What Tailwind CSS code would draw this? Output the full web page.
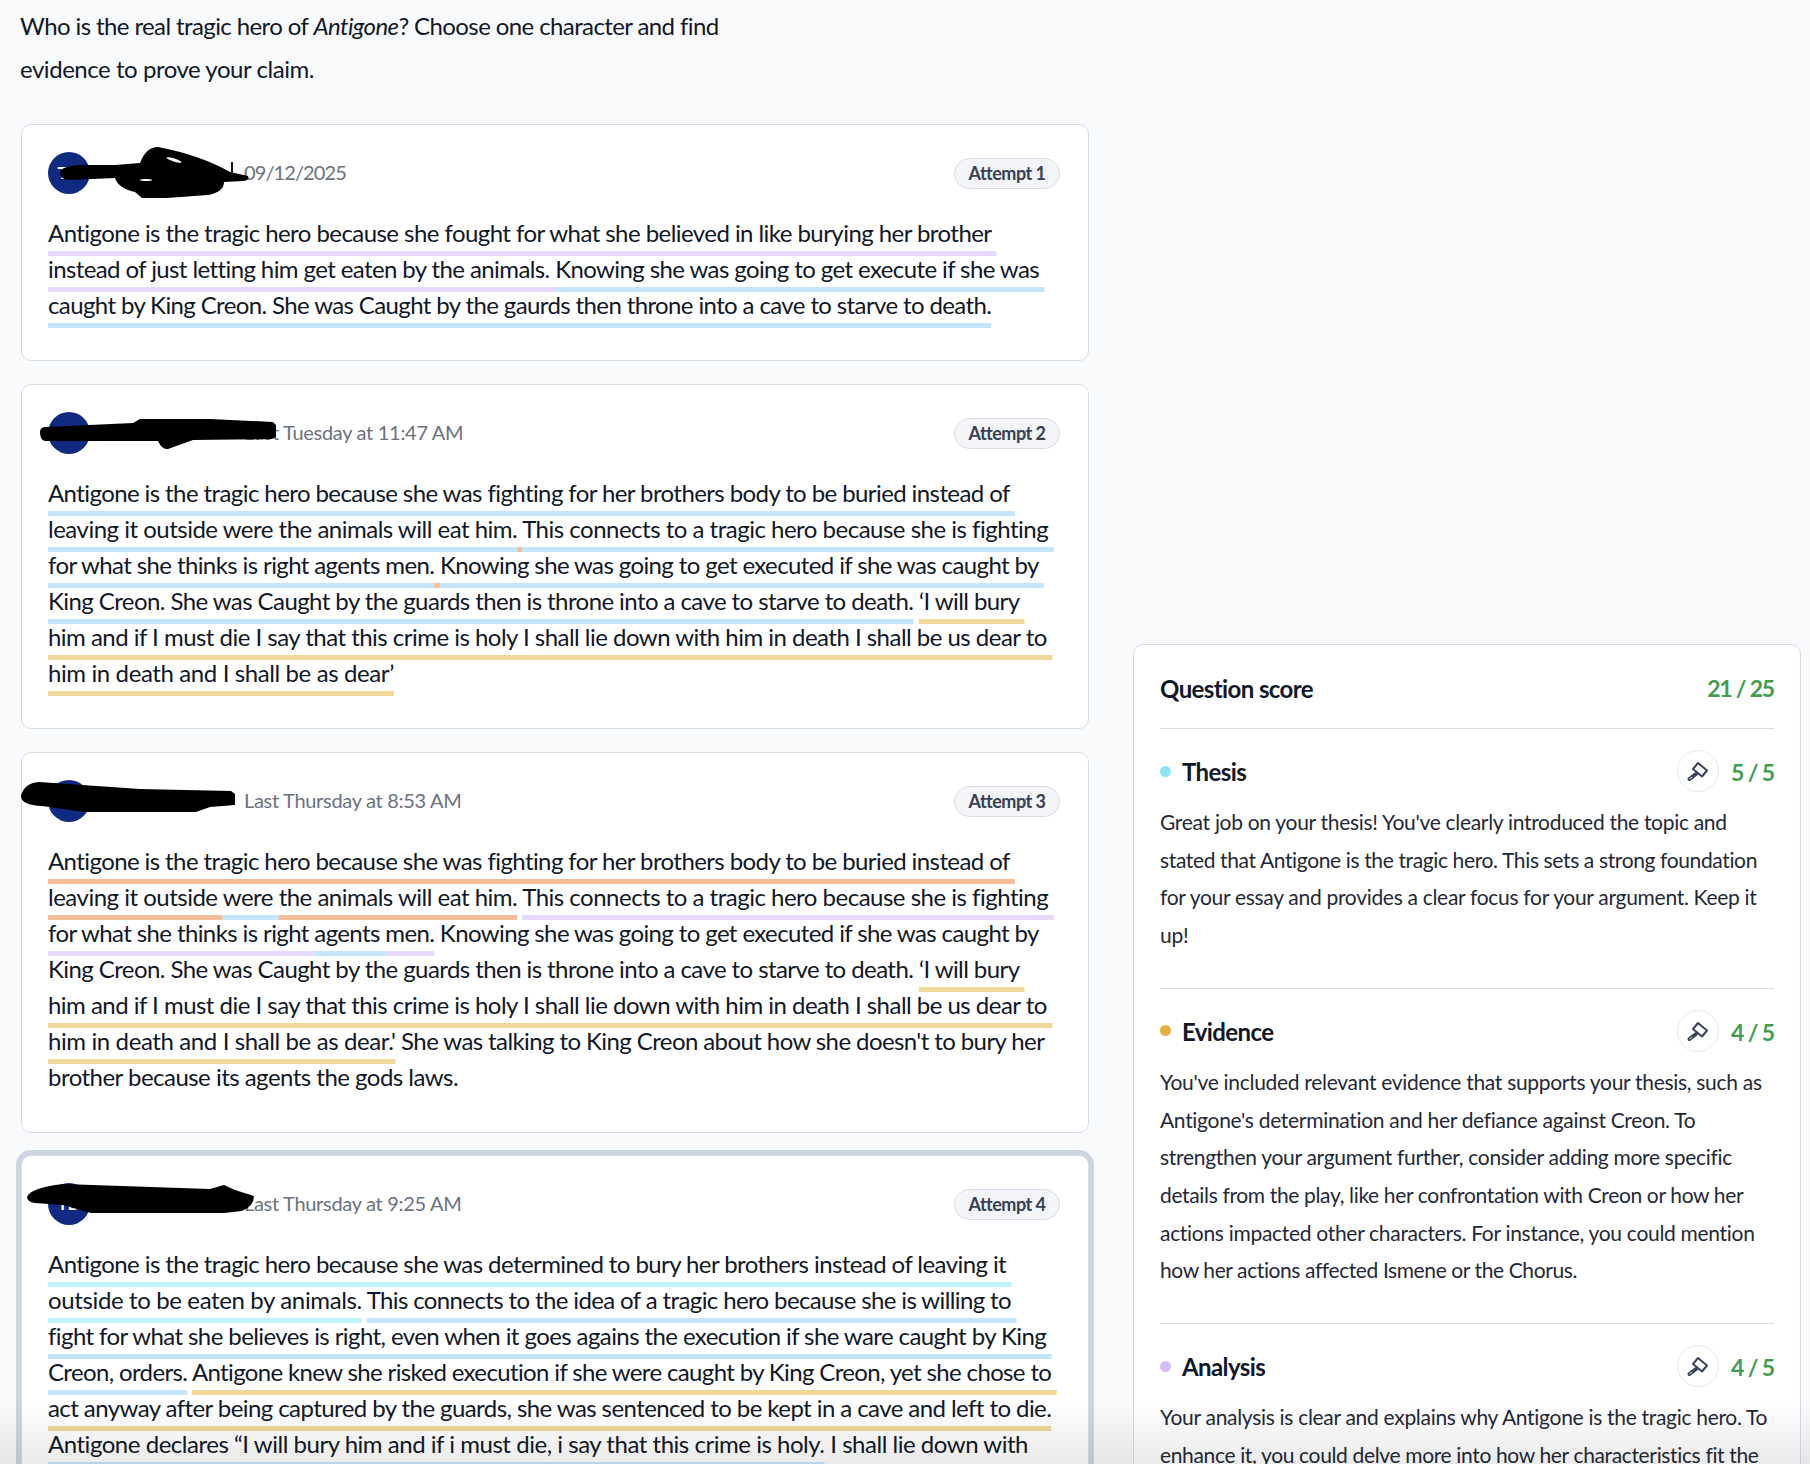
<!DOCTYPE html>
<html lang="en">
<head>
  <meta charset="UTF-8">
  <meta name="viewport" content="width=device-width, initial-scale=1.0">
  <title>Question score</title>
  <script src="https://cdn.jsdelivr.net/npm/@tailwindcss/browser@4"></script>
</head>
<body class="bg-[#f9fafc] font-['Lato','Noto_Sans',sans-serif] text-[#111827]">
<div class="relative h-[1464px] overflow-hidden flex pl-[21px] gap-[44px]">

  <!-- Left column: prompt and attempts -->
  <div class="w-[1068px] shrink-0">
    <p class="text-[24px] leading-[43px] tracking-[-0.6px] pt-[4px] pb-[34px] -ml-[1px]">Who is the real tragic hero of <em>Antigone</em>? Choose one character and find<br><span class="tracking-[-0.46px]">evidence to prove your claim.</span></p>

    <div class="flex flex-col gap-[23px]">

      <!-- Attempt 1 -->
      <div class="relative bg-white border border-[#d5dce8] rounded-[10px] pt-[27px] px-[26px] pb-[37px]">
        <div class="flex items-center justify-between mb-[21px]">
          <div class="flex items-center">
            <div class="w-[42px] h-[42px] rounded-full bg-[#0f2a80] text-white text-[17px] font-bold flex items-center justify-center">TD</div>
            <span class="w-[154px]"></span>
            <span class="text-[20px] text-[#6b7280] tracking-[-0.9px] -mt-[2px]">09/12/2025</span>
          </div>
          <span class="h-[31px] w-[106px] rounded-full bg-[#f3f5f9] border border-[#d5dce8] text-[18px] font-bold tracking-[-0.5px] text-[#374151] flex items-center justify-center mr-[2px]">Attempt 1</span>
        </div>
        <div class="text-[24px] leading-[36px] underline-offset-[9px] [text-decoration-skip-ink:none] [&>div]:whitespace-pre [&_span]:[text-decoration-thickness:5px]">
          <div class="tracking-[-0.556px]"><span class="underline decoration-[#e6d9fb]">Antigone is the tragic hero because she fought for what she believed in like burying her brother </span></div>
          <div class="tracking-[-0.6px]"><span class="underline decoration-[#e6d9fb]">instead of just letting him get eaten by the animals. </span><span class="underline decoration-[#c5e6fa]">Knowing she was going to get execute if she was </span></div>
          <div class="tracking-[-0.617px]"><span class="underline decoration-[#c5e6fa]">caught by King Creon. She was Caught by the gaurds then throne into a cave to starve to death.</span></div>
        </div>
        <svg class="absolute -left-[22px] -top-[1px] w-[300px] h-[100px]" viewBox="0 124 300 100"><rect x="231" y="162" width="2" height="14" fill="#111827"/><path fill="#000" d="M60 172Q62 166 80 165L115 165L140 163Q146 147 158 147Q200 155 230 172L248 176Q250 180 244 181L224 182Q224 192 208 195L167 198L142 198L135 192Q118 188 115 178L70 180Q60 180 60 172Z"/><ellipse cx="174" cy="160" rx="8" ry="1.5" fill="#fff" transform="rotate(18 174 160)"/><ellipse cx="146" cy="180" rx="6" ry="1" fill="#fff"/></svg>
      </div>

      <!-- Attempt 2 -->
      <div class="relative bg-white border border-[#d5dce8] rounded-[10px] pt-[27px] px-[26px] pb-[37px]">
        <div class="flex items-center justify-between mb-[21px]">
          <div class="flex items-center">
            <div class="w-[42px] h-[42px] rounded-full bg-[#0f2a80] text-white text-[17px] font-bold flex items-center justify-center">TD</div>
            <span class="w-[154px]"></span>
            <span class="text-[20px] text-[#6b7280] tracking-[-0.3px] -mt-[2px]">Last Tuesday at 11:47 AM</span>
          </div>
          <span class="h-[31px] w-[106px] rounded-full bg-[#f3f5f9] border border-[#d5dce8] text-[18px] font-bold tracking-[-0.5px] text-[#374151] flex items-center justify-center mr-[2px]">Attempt 2</span>
        </div>
        <div class="text-[24px] leading-[36px] underline-offset-[9px] [text-decoration-skip-ink:none] [&>div]:whitespace-pre [&_span]:[text-decoration-thickness:5px]">
          <div class="tracking-[-0.59px]"><span class="underline decoration-[#c5e6fa]">Antigone is the tragic hero because she was fighting for her brothers body to be buried instead of </span></div>
          <div class="tracking-[-0.5px]"><span class="underline decoration-[#c5e6fa]">leaving it outside were the animals will eat him.</span><span class="underline decoration-[#f4bc98]"> </span><span class="underline decoration-[#c5e6fa]">This connects to a tragic hero because she is fighting </span></div>
          <div class="tracking-[-0.61px]"><span class="underline decoration-[#c5e6fa]">for what she thinks is right agents men.</span><span class="underline decoration-[#f4bc98]"> </span><span class="underline decoration-[#c5e6fa]">Knowing she was going to get executed if she was caught by </span></div>
          <div class="tracking-[-0.575px]"><span class="underline decoration-[#c5e6fa]">King Creon. She was Caught by the guards then is throne into a cave to starve to death.</span> <span class="underline decoration-[#efd89a]">‘I will bury </span></div>
          <div class="tracking-[-0.52px]"><span class="underline decoration-[#efd89a]">him and if I must die I say that this crime is holy I shall lie down with him in death I shall be us dear to </span></div>
          <div class="tracking-[-0.39px]"><span class="underline decoration-[#efd89a]">him in death and I shall be as dear’</span></div>
        </div>
        <svg class="absolute -left-[22px] -top-[1px] w-[300px] h-[100px]" viewBox="0 384 300 100"><path fill="#000" d="M40 432Q40 427 46 427L133 423L140 419L210 419L273 422L276 425L276 437L272 439L193 440L168 449Q162 450 158 441L46 441Q40 441 40 432Z"/></svg>
      </div>

      <!-- Attempt 3 -->
      <div class="relative bg-white border border-[#d5dce8] rounded-[10px] pt-[27px] px-[26px] pb-[37px]">
        <div class="flex items-center justify-between mb-[21px]">
          <div class="flex items-center">
            <div class="w-[42px] h-[42px] rounded-full bg-[#0f2a80] text-white text-[17px] font-bold flex items-center justify-center">TD</div>
            <span class="w-[154px]"></span>
            <span class="text-[20px] text-[#6b7280] tracking-[-0.3px] -mt-[2px]">Last Thursday at 8:53 AM</span>
          </div>
          <span class="h-[31px] w-[106px] rounded-full bg-[#f3f5f9] border border-[#d5dce8] text-[18px] font-bold tracking-[-0.5px] text-[#374151] flex items-center justify-center mr-[2px]">Attempt 3</span>
        </div>
        <div class="text-[24px] leading-[36px] underline-offset-[9px] [text-decoration-skip-ink:none] [&>div]:whitespace-pre [&_span]:[text-decoration-thickness:5px]">
          <div class="tracking-[-0.59px]"><span class="underline decoration-[#f4bc98]">Antigone is the tragic hero because she was fighting for her brothers body to be buried instead of </span></div>
          <div class="tracking-[-0.5px]"><span class="underline decoration-[#f4bc98]">leaving it outside </span><span class="underline decoration-[#c5e6fa]">were </span><span class="underline decoration-[#f4bc98]">the animals will eat him.</span> <span class="underline decoration-[#e6d9fb]">This connects to a tragic hero because she is fighting </span></div>
          <div class="tracking-[-0.61px]"><span class="underline decoration-[#e6d9fb]">for what she thinks is right </span><span class="underline decoration-[#c5e6fa]">agents </span><span class="underline decoration-[#e6d9fb]">men.</span> Knowing she was going to get executed if she was caught by</div>
          <div class="tracking-[-0.575px]">King Creon. She was Caught by the guards then is throne into a cave to starve to death. <span class="underline decoration-[#efd89a]">‘I will bury </span></div>
          <div class="tracking-[-0.52px]"><span class="underline decoration-[#efd89a]">him and if I must die I say that this crime is holy I shall lie down with him in death I shall be us dear to </span></div>
          <div class="tracking-[-0.59px]"><span class="underline decoration-[#efd89a] tracking-[-0.39px]">him in death and I shall be as dear.'</span> She was talking to King Creon about how she doesn't to bury her</div>
          <div class="tracking-[-0.52px]">brother because its agents the gods laws.</div>
        </div>
        <svg class="absolute -left-[22px] -top-[1px] w-[300px] h-[100px]" viewBox="0 753 300 100"><path fill="#000" d="M21 797Q24 784 39 783L140 790L231 792L235 795L235 806L210 808L196 813L84 813L42 807Q21 806 21 797Z"/></svg>
      </div>

      <!-- Attempt 4, selected -->
      <div class="relative -mt-[1px] bg-white border border-[#d5dce8] ring-[5px] ring-[#cdd5e2] rounded-[10px] pt-[27px] px-[26px] pb-[37px]">
        <div class="flex items-center justify-between mb-[21px]">
          <div class="flex items-center">
            <div class="w-[42px] h-[42px] rounded-full bg-[#0f2a80] text-white text-[17px] font-bold flex items-center justify-center">TD</div>
            <span class="w-[154px]"></span>
            <span class="text-[20px] text-[#6b7280] tracking-[-0.3px] -mt-[2px]">Last Thursday at 9:25 AM</span>
          </div>
          <span class="h-[31px] w-[106px] rounded-full bg-[#f3f5f9] border border-[#d5dce8] text-[18px] font-bold tracking-[-0.5px] text-[#374151] flex items-center justify-center mr-[2px]">Attempt 4</span>
        </div>
        <div class="text-[24px] leading-[36px] underline-offset-[9px] [text-decoration-skip-ink:none] [&>div]:whitespace-pre [&_span]:[text-decoration-thickness:5px]">
          <div class="tracking-[-0.575px]"><span class="underline decoration-[#bff3fb]">Antigone is the tragic hero because she was determined to bury her brothers instead of leaving it </span></div>
          <div class="tracking-[-0.62px]"><span class="underline decoration-[#bff3fb] tracking-[-0.37px]">outside to be eaten by animals.</span> <span class="underline decoration-[#c5e6fa]">This connects to the idea of a tragic hero because she is willing to </span></div>
          <div class="tracking-[-0.59px]"><span class="underline decoration-[#c5e6fa]">fight for what she believes is right, even when it goes agains the execution if she ware caught by King </span></div>
          <div class="tracking-[-0.64px]"><span class="underline decoration-[#c5e6fa]">Creon, orders.</span> <span class="underline decoration-[#efd89a]">Antigone knew she risked execution if she were caught by King Creon, yet she chose to </span></div>
          <div class="tracking-[-0.575px]"><span class="underline decoration-[#efd89a]">act anyway after being captured by the guards, she was sentenced to be kept in a cave and left to die.</span></div>
          <div class="tracking-[-0.47px]"><span class="underline decoration-[#c5e6fa]">Antigone declares “I will bury him and if i must die, i say that this crime is holy.</span> I shall lie down with</div>
        </div>
        <svg class="absolute -left-[22px] -top-[1px] w-[300px] h-[100px]" viewBox="0 1157 300 100"><path fill="#000" d="M27 1199Q30 1190 63 1186L210 1191L224 1187L235 1192L254 1198Q254 1208 242 1213L224 1215L91 1215L63 1207L35 1205Q27 1204 27 1199Z"/></svg>
      </div>
    </div>
  </div>

  <!-- Right column: question score -->
  <div class="w-[668px] shrink-0 mt-[644px] bg-white border border-[#d5dce8] rounded-[10px] px-[26px] text-[#1f2937] self-start">
    <div class="flex items-center justify-between h-[84px] pt-[4px] border-b border-[#d5dce8]">
      <span class="text-[24px] font-bold text-[#111827] tracking-[-0.6px]">Question score</span>
      <span class="text-[23px] font-bold text-[#3f9e50] tracking-[-1.2px]">21 / 25</span>
    </div>

    <div class="border-b border-[#d5dce8] pt-[21px] pb-[34px]">
      <div class="flex items-center h-[42px] mb-[11px]">
        <span class="w-[11px] h-[11px] rounded-full bg-[#8de4f8]"></span>
        <span class="ml-[11px] mt-[2px] text-[24px] font-bold text-[#111827] tracking-[-0.6px]">Thesis</span>
        <span class="ml-auto w-[42px] h-[42px] rounded-full border border-[#e5e9f0] flex items-center justify-center">
          <svg class="w-[24px] h-[24px]" viewBox="0 0 24 24" fill="none" stroke="#3b4459"><path stroke-width="2" stroke-linejoin="round" d="M12 4L21 11.5L16 17.5L7 10Z"/><path stroke-width="4" stroke-linecap="round" d="M3.5 20L10 15"/><path stroke="#fff" stroke-width="1" stroke-linecap="round" d="M4 19.6L5.5 18.5"/></svg>
        </span>
        <span class="ml-[12px] mt-[2px] text-[23px] font-bold text-[#3f9e50] tracking-[-1.1px]">5 / 5</span>
      </div>
      <div class="text-[21px] leading-[37.7px] tracking-[-0.3px] [&>div]:whitespace-pre">
        <div>Great job on your thesis! You've clearly introduced the topic and</div>
        <div class="tracking-[-0.37px]">stated that Antigone is the tragic hero. This sets a strong foundation</div>
        <div>for your essay and provides a clear focus for your argument. Keep it</div>
        <div>up!</div>
      </div>
    </div>

    <div class="border-b border-[#d5dce8] pt-[21px] pb-[34px]">
      <div class="flex items-center h-[42px] mb-[11px]">
        <span class="w-[11px] h-[11px] rounded-full bg-[#e5b23f]"></span>
        <span class="ml-[11px] mt-[2px] text-[24px] font-bold text-[#111827] tracking-[-0.6px]">Evidence</span>
        <span class="ml-auto w-[42px] h-[42px] rounded-full border border-[#e5e9f0] flex items-center justify-center">
          <svg class="w-[24px] h-[24px]" viewBox="0 0 24 24" fill="none" stroke="#3b4459"><path stroke-width="2" stroke-linejoin="round" d="M12 4L21 11.5L16 17.5L7 10Z"/><path stroke-width="4" stroke-linecap="round" d="M3.5 20L10 15"/><path stroke="#fff" stroke-width="1" stroke-linecap="round" d="M4 19.6L5.5 18.5"/></svg>
        </span>
        <span class="ml-[12px] mt-[2px] text-[23px] font-bold text-[#3f9e50] tracking-[-1.1px]">4 / 5</span>
      </div>
      <div class="text-[21px] leading-[37.7px] tracking-[-0.3px] [&>div]:whitespace-pre">
        <div>You've included relevant evidence that supports your thesis, such as</div>
        <div>Antigone's determination and her defiance against Creon. To</div>
        <div>strengthen your argument further, consider adding more specific</div>
        <div class="tracking-[-0.35px]">details from the play, like her confrontation with Creon or how her</div>
        <div>actions impacted other characters. For instance, you could mention</div>
        <div class="tracking-[-0.4px]">how her actions affected Ismene or the Chorus.</div>
      </div>
    </div>

    <div class="pt-[21px]">
      <div class="flex items-center h-[42px] mb-[11px]">
        <span class="w-[11px] h-[11px] rounded-full bg-[#d6bcf9]"></span>
        <span class="ml-[11px] mt-[2px] text-[24px] font-bold text-[#111827] tracking-[-0.6px]">Analysis</span>
        <span class="ml-auto w-[42px] h-[42px] rounded-full border border-[#e5e9f0] flex items-center justify-center">
          <svg class="w-[24px] h-[24px]" viewBox="0 0 24 24" fill="none" stroke="#3b4459"><path stroke-width="2" stroke-linejoin="round" d="M12 4L21 11.5L16 17.5L7 10Z"/><path stroke-width="4" stroke-linecap="round" d="M3.5 20L10 15"/><path stroke="#fff" stroke-width="1" stroke-linecap="round" d="M4 19.6L5.5 18.5"/></svg>
        </span>
        <span class="ml-[12px] mt-[2px] text-[23px] font-bold text-[#3f9e50] tracking-[-1.1px]">4 / 5</span>
      </div>
      <div class="text-[21px] leading-[37.7px] tracking-[-0.3px] [&>div]:whitespace-pre">
        <div>Your analysis is clear and explains why Antigone is the tragic hero. To</div>
        <div class="tracking-[-0.35px]">enhance it, you could delve more into how her characteristics fit the</div>
      </div>
    </div>
  </div>

  <!-- Fade at the bottom edge -->
  <div class="absolute left-0 right-0 bottom-0 h-[64px] bg-linear-to-b from-transparent to-black/8"></div>
</div>
</body>
</html>
